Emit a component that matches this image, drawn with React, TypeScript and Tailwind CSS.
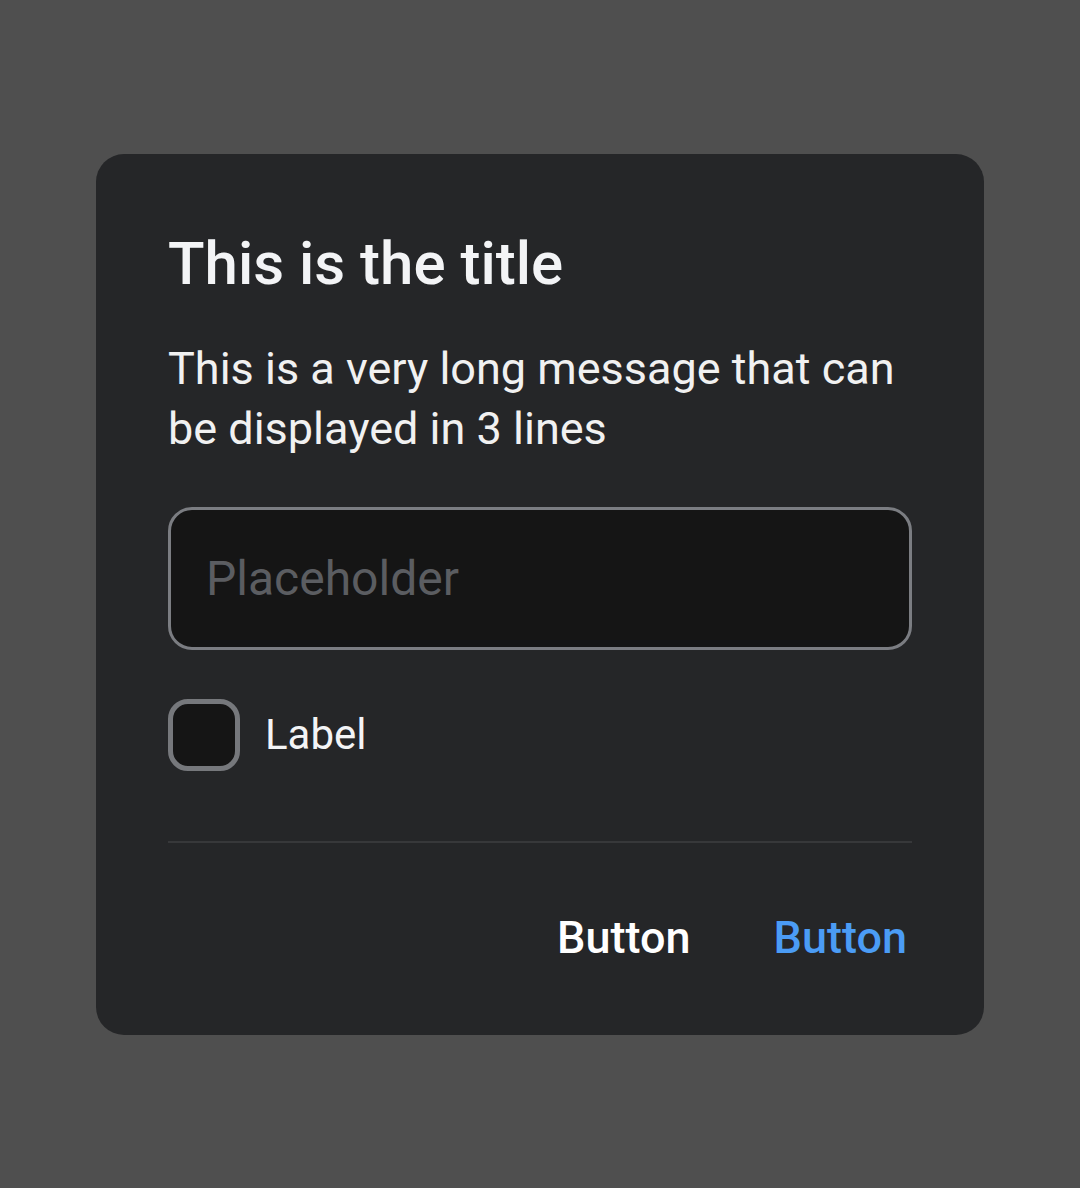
import { useState } from "react";

export default function App() {
  const [checked, setChecked] = useState(false);

  return (
    <div className="min-h-[1188px] w-full bg-[#4f4f4f] flex items-center justify-center font-['Roboto',sans-serif]">
      <div className="w-[888px] h-[881px] rounded-[28px] bg-[#252628] px-[72px] pt-[75px] flex flex-col">
        <h2 className="text-[60px] leading-[70px] font-medium text-[#f3f4f6]">
          This is the title
        </h2>
        <p className="mt-[40px] text-[45px] leading-[60px] text-[#f1f1f1]">
          This is a very long message that can be displayed in 3 lines
        </p>
        <input
          type="text"
          placeholder="Placeholder"
          className="mt-[48px] h-[143px] w-full rounded-[24px] border-[3px] border-[#7b7d82] bg-[#151515] px-[35px] text-[48px] text-white placeholder:text-[#5b5d61] outline-none"
        />
        <label className="mt-[49px] flex items-center gap-[25px] cursor-pointer">
          <button
            type="button"
            onClick={() => setChecked(!checked)}
            className="w-[72px] h-[72px] rounded-[20px] border-[5px] border-[#76787c] bg-[#151515]"
          />
          <span className="text-[42px] leading-[52px] text-[#f3f4f6]">Label</span>
        </label>
        <div className="mt-[70px] h-[2px] bg-[#37383a]" />
        <div className="mt-[69px] flex justify-end gap-[83px] pr-[5px]">
          <button className="text-[45px] leading-[52px] font-medium text-white">Button</button>
          <button className="text-[45px] leading-[52px] font-medium text-[#4b9cf5]">Button</button>
        </div>
      </div>
    </div>
  );
}
